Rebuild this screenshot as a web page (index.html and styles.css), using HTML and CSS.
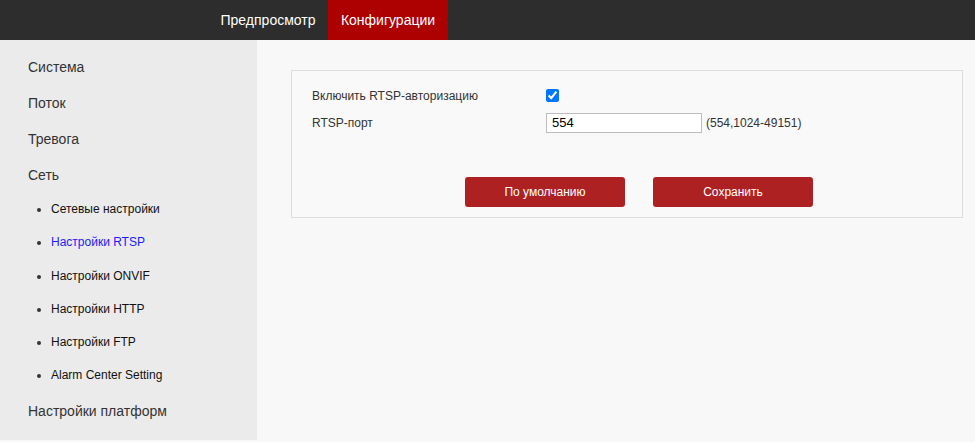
FILE: index.html
```html
<!DOCTYPE html>
<html lang="ru">
<head>
<meta charset="utf-8">
<title>Настройки RTSP</title>
<link rel="stylesheet" href="styles.css">
</head>
<body>
<header class="topbar">
  <nav class="tabs">
    <a class="tab">Предпросмотр</a>
    <a class="tab active">Конфигурации</a>
  </nav>
</header>
<div class="layout">
  <aside class="sidebar">
    <div class="nav-item">Система</div>
    <div class="nav-item">Поток</div>
    <div class="nav-item">Тревога</div>
    <div class="nav-item">Сеть</div>
    <ul class="sub">
      <li>Сетевые настройки</li>
      <li class="current">Настройки RTSP</li>
      <li>Настройки ONVIF</li>
      <li>Настройки HTTP</li>
      <li>Настройки FTP</li>
      <li>Alarm Center Setting</li>
    </ul>
    <div class="nav-item">Настройки платформ</div>
  </aside>
  <main class="content">
    <section class="panel">
      <div class="row">
        <label class="label">Включить RTSP-авторизацию</label>
        <div class="value"><input type="checkbox" class="check" checked></div>
      </div>
      <div class="row">
        <label class="label">RTSP-порт</label>
        <div class="value"><input type="text" class="field" value="554"><span class="hint">(554,1024-49151)</span></div>
      </div>
      <div class="buttons">
        <button class="btn">По умолчанию</button>
        <button class="btn">Сохранить</button>
      </div>
    </section>
  </main>
</div>
</body>
</html>
```
FILE: styles.css
```css
* { box-sizing: border-box; }
html, body { margin: 0; padding: 0; }
body {
  font-family: "Liberation Sans", Arial, sans-serif;
  background: #f8f8f8;
  color: #333;
}
.topbar {
  height: 40px;
  background: #2d2d2d;
}
.tabs {
  display: flex;
  height: 40px;
  padding-left: 208px;
}
.tab {
  width: 120px;
  height: 40px;
  line-height: 40px;
  text-align: center;
  color: #fff;
  font-size: 14px;
}
.tab.active { background: #ad0000; }
.layout { display: flex; align-items: flex-start; }
.sidebar {
  width: 257px;
  flex: none;
  background: #ebebeb;
  padding: 9px 0 11px 28px;
}
.nav-item {
  height: 36px;
  line-height: 36px;
  font-size: 14px;
  color: #333;
}
.sub {
  margin: 0;
  padding: 0 0 0 23px;
  list-style: disc;
}
.sub li {
  height: 33.3px;
  line-height: 33.3px;
  font-size: 12px;
  color: #111;
}
.sub li::marker { color: #333; }
.sub li.current { color: #1b1bff; }
.content {
  flex: 1;
  padding: 30px 12px 0 34px;
}
.panel {
  border: 1px solid #dcdcdc;
  background: #f9f9f9;
  padding: 11px 20px 10px 20px;
}
.row {
  display: flex;
  align-items: center;
  height: 27px;
}
.label {
  width: 234px;
  font-size: 12px;
  color: #333;
}
.value { display: flex; align-items: center; }
.check { margin: 0; width: 13px; height: 13px; }
.field {
  width: 156px;
  height: 20px;
  border: 1px solid #bdbdbd;
  background: #fff;
  font-family: "Liberation Sans", Arial, sans-serif;
  font-size: 13px;
  color: #000;
  padding: 0 5px;
  margin: 0;
}
.hint {
  margin-left: 4px;
  font-size: 12px;
  color: #333;
}
.buttons {
  display: flex;
  gap: 28px;
  margin-top: 41px;
  padding-left: 153px;
}
.btn {
  width: 160px;
  height: 30px;
  border: none;
  border-radius: 3px;
  background: #ae2122;
  color: #fff;
  font-family: "Liberation Sans", Arial, sans-serif;
  font-size: 12px;
  padding: 0;
}
```
